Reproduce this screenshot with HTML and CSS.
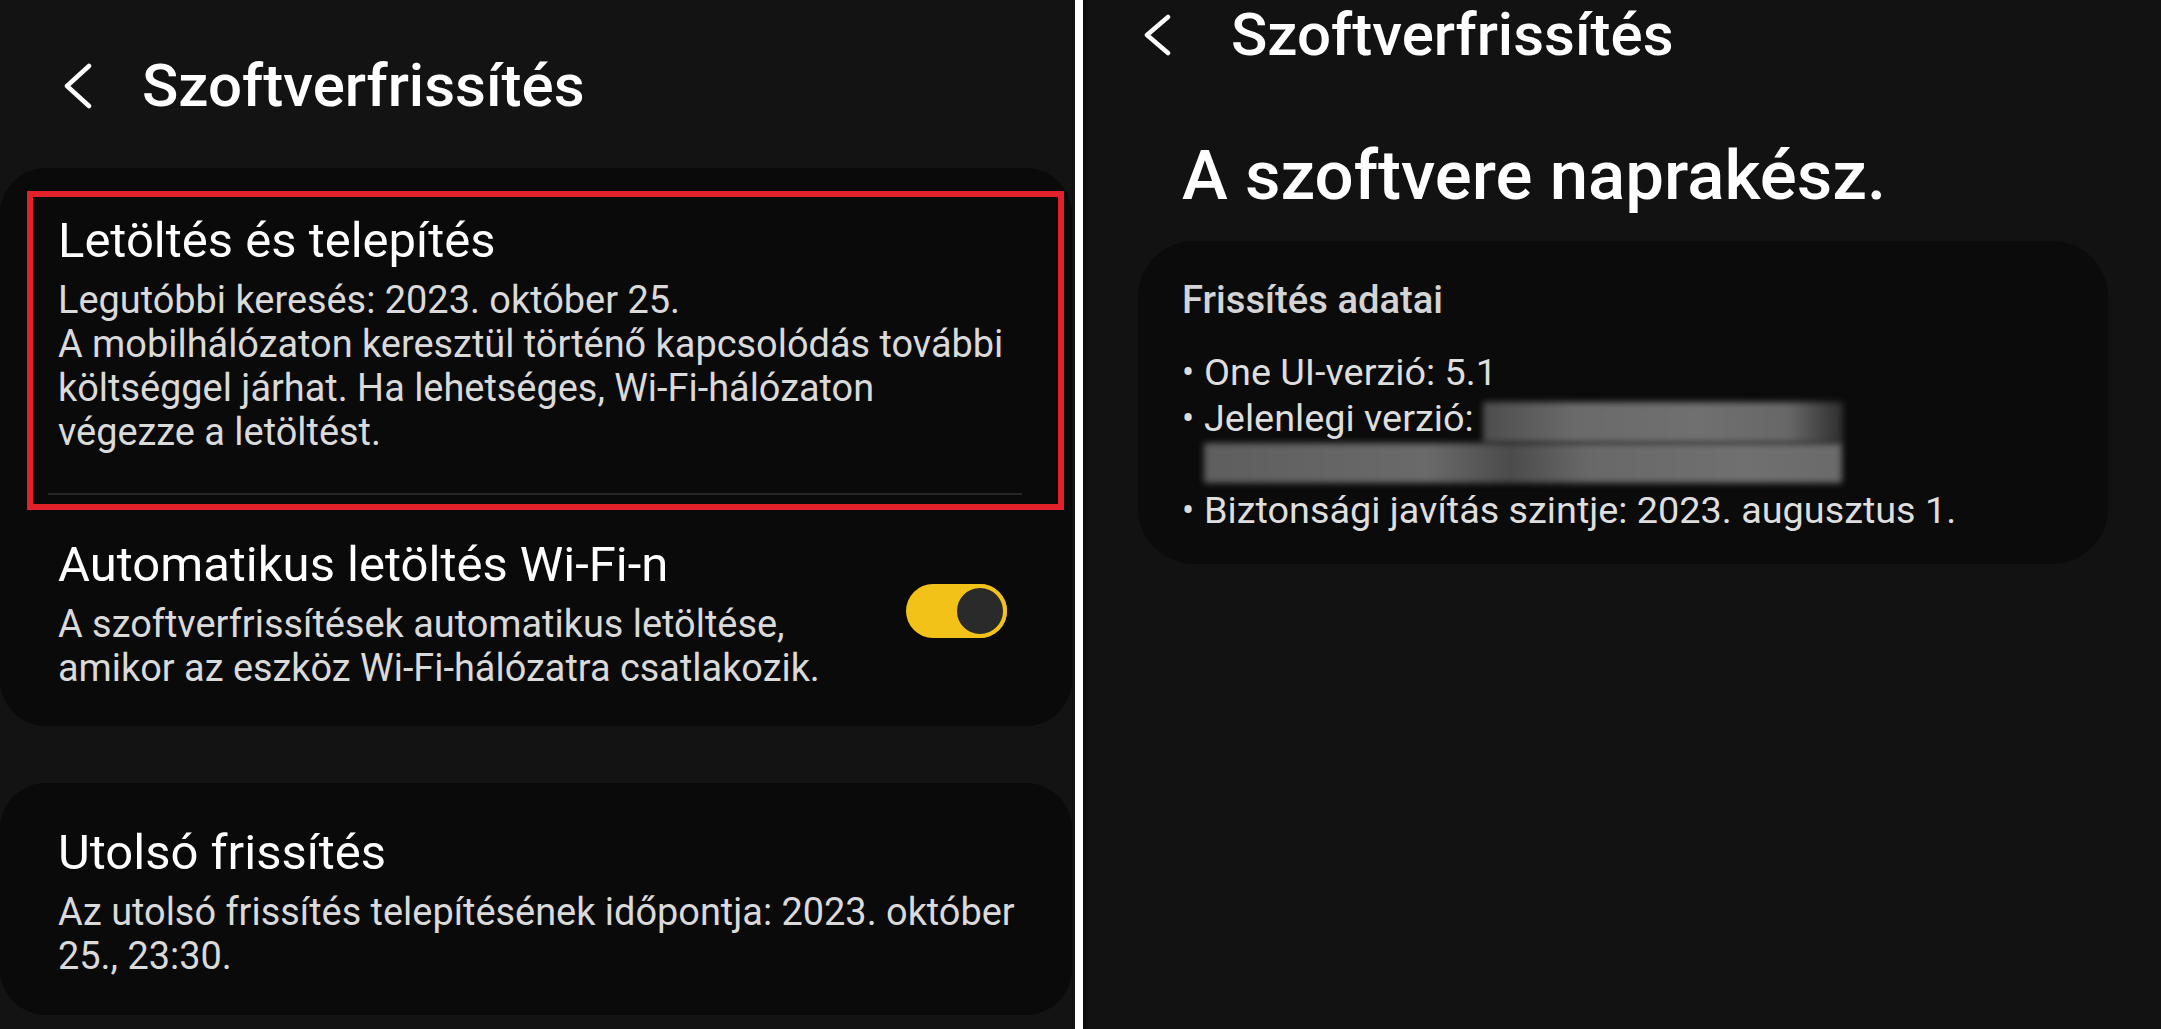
FILE: index.html
```html
<!DOCTYPE html>
<html lang="hu">
<head>
<meta charset="utf-8">
<title>Szoftverfrissítés</title>
<link rel="stylesheet" href="styles.css">
</head>
<body>
<div class="screen">
  <section class="panel panel-left">
    <header class="appbar">
      <svg class="back" width="34" height="46" viewBox="0 0 34 46"><polyline points="28,3 6,23 28,43" fill="none" stroke="#ffffff" stroke-width="4.5" stroke-linecap="round" stroke-linejoin="round"/></svg>
      <h1 class="appbar-title">Szoftverfrissítés</h1>
    </header>

    <div class="card card-group">
      <div class="item item-first">
        <div class="item-text">
          <div class="item-title">Letöltés és telepítés</div>
          <div class="item-sub">Legutóbbi keresés: 2023. október 25.<br>A mobilhálózaton keresztül történő kapcsolódás további<br>költséggel járhat. Ha lehetséges, Wi-Fi-hálózaton<br>végezze a letöltést.</div>
        </div>
      </div>
      <div class="divider"></div>
      <div class="item item-second">
        <div class="item-text">
          <div class="item-title">Automatikus letöltés Wi-Fi-n</div>
          <div class="item-sub">A szoftverfrissítések automatikus letöltése,<br>amikor az eszköz Wi-Fi-hálózatra csatlakozik.</div>
        </div>
        <div class="switch"><div class="switch-thumb"></div></div>
      </div>
      <div class="highlight"></div>
    </div>

    <div class="card card-last">
      <div class="item item-third">
        <div class="item-text">
          <div class="item-title">Utolsó frissítés</div>
          <div class="item-sub">Az utolsó frissítés telepítésének időpontja: 2023. október<br>25., 23:30.</div>
        </div>
      </div>
    </div>
  </section>

  <section class="panel panel-right">
    <header class="appbar appbar-right">
      <svg class="back back-right" width="32" height="42" viewBox="0 0 32 42"><polyline points="27,3 6,21 27,39" fill="none" stroke="#ffffff" stroke-width="4.5" stroke-linecap="round" stroke-linejoin="round"/></svg>
      <h1 class="appbar-title">Szoftverfrissítés</h1>
    </header>
    <h2 class="status">A szoftvere naprakész.</h2>
    <div class="info-card">
      <div class="info-title">Frissítés adatai</div>
      <ul class="info-list">
        <li>One UI-verzió: 5.1</li>
        <li>Jelenlegi verzió: <span class="redact redact-a"></span><br><span class="redact redact-b"></span></li>
        <li>Biztonsági javítás szintje: 2023. augusztus 1.</li>
      </ul>
    </div>
  </section>
</div>
</body>
</html>
```

FILE: styles.css
```css
* { box-sizing: border-box; }

html, body {
  margin: 0;
  padding: 0;
  background: #ffffff;
}

body {
  font-family: Roboto, "Noto Sans", "DejaVu Sans", sans-serif;
  color: #ffffff;
  width: 2161px;
  height: 1029px;
  overflow: hidden;
}

.screen {
  display: flex;
  gap: 8px;
  height: 1029px;
}

.panel {
  height: 1029px;
  overflow: hidden;
}

.panel-left {
  width: 1075px;
  background: #131313;
  padding-right: 3px;
}

.panel-right {
  flex: 1;
  background: #121212;
  border-left: 4px solid #0c0c0c;
}

/* app bar */
.appbar {
  display: flex;
  align-items: center;
  height: 168px;
  padding-top: 4px;
  padding-left: 61px;
}

.back {
  flex: none;
  display: block;
}

.appbar-title {
  margin: 0 0 0 47px;
  font-size: 60px;
  font-weight: 500;
  line-height: 70px;
  letter-spacing: 0;
  color: #ffffff;
  white-space: nowrap;
}

/* cards */
.card {
  position: relative;
  background: #0a0a0a;
  border-radius: 46px;
}

.item {
  display: flex;
  align-items: center;
  padding-left: 58px;
  padding-right: 65px;
}

.item-text {
  flex: 1;
}

.item-title {
  font-size: 49px;
  line-height: 56px;
  font-weight: 400;
  color: #ffffff;
  white-space: nowrap;
}

.item-sub {
  margin-top: 9px;
  font-size: 37.9px;
  line-height: 44px;
  color: #dadada;
  white-space: nowrap;
}

.item-first {
  padding-top: 45px;
  padding-bottom: 39px;
}

.divider {
  height: 2px;
  margin: 0 50px 0 48px;
  background: #262626;
}

.item-second {
  padding-top: 42px;
  padding-bottom: 36px;
}

.card-last {
  margin-top: 57px;
}

.item-third {
  padding-top: 42px;
  padding-bottom: 37px;
}

/* switch */
.switch {
  flex: none;
  width: 101px;
  height: 54px;
  border-radius: 27px;
  background: #f2c219;
  display: flex;
  justify-content: flex-end;
  margin-top: -6px;
}

.switch-thumb {
  width: 54px;
  height: 54px;
  border-radius: 50%;
  background: #2a2a2a;
  border: 4px solid #f2c219;
}

/* red annotation frame */
.highlight {
  position: absolute;
  left: 27px;
  top: 23px;
  width: 1037px;
  height: 319px;
  border: 6px solid #e2212a;
  pointer-events: none;
}

/* right panel */
.appbar-right {
  height: 70px;
  padding-top: 0;
  padding-left: 54px;
}

.appbar-right .appbar-title {
  margin-left: 58px;
}

.status {
  margin: 66px 0 0 95px;
  font-size: 69px;
  line-height: 80px;
  font-weight: 500;
  color: #ffffff;
  white-space: nowrap;
}

.info-card {
  margin: 25px 0 0 51px;
  width: 970px;
  background: #0b0b0b;
  border-radius: 56px;
  padding: 37px 40px 30px 44px;
}

.info-title {
  font-size: 38.2px;
  line-height: 45px;
  font-weight: 500;
  color: #d4d4d4;
}

.info-list {
  list-style: none;
  margin: 27px 0 0 0;
  padding: 0 0 0 22px;
  font-size: 37.8px;
  line-height: 45px;
  color: #dedede;
}

.info-list li {
  text-indent: -22px;
  white-space: nowrap;
}

.info-list li::before {
  content: "•";
  display: inline-block;
  width: 22px;
  text-indent: 0;
  font-size: 36px;
}

.redact {
  display: inline-block;
  vertical-align: top;
  text-indent: 0;
  filter: blur(3px);
}

.redact-a {
  width: 360px;
  height: 41px;
  margin-top: 6px;
  background: linear-gradient(90deg, #4d4d4d 0%, #6a6a6a 25%, #707070 60%, #676767 85%, #2e2e2e 100%);
}

.redact-b {
  width: 638px;
  height: 40px;
  margin-top: 0;
  background: linear-gradient(90deg, #5e5e5e 0%, #6a6a6a 35%, #4b4b4b 48%, #686868 60%, #707070 85%, #6a6a6a 100%);
}
```
